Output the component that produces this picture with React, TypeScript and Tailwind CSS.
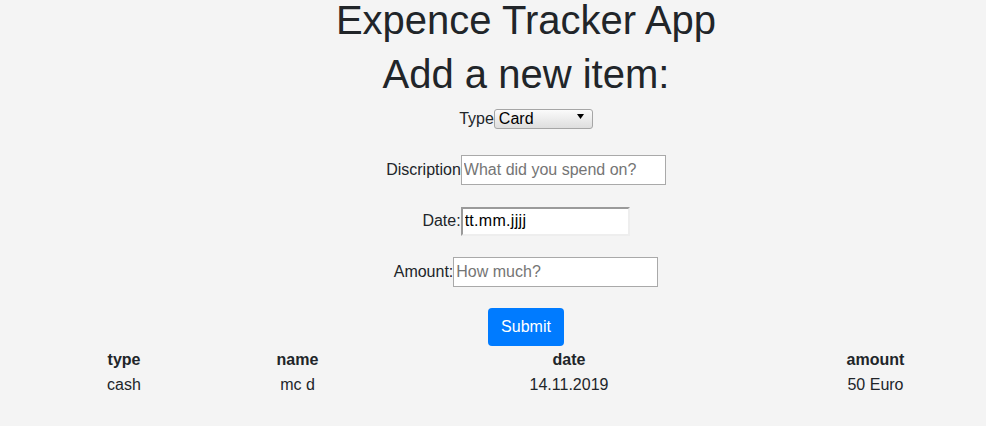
import { useState } from "react";

const rows = [{ type: "cash", name: "mc d", date: "14.11.2019", amount: "50 Euro" }];

export default function App() {
  const [type, setType] = useState("Card");

  return (
    <div className="min-h-[426px] bg-[#f4f4f4] text-[#212529] font-['Liberation_Sans',Arial,sans-serif] text-[16px]">
      <div className="flex flex-col items-center pl-[66px]">
        <h1 className="text-[40px] leading-[40px] font-normal">Expence Tracker App</h1>
        <h2 className="mt-[14px] text-[40px] leading-[40px] font-normal">Add a new item:</h2>

        <div className="mt-[8px] flex h-[30px] items-center">
          <label className="mt-[3px]">Type</label>
          <div className="relative h-[20px] w-[99px]">
            <select
              value={type}
              onChange={(e) => setType(e.target.value)}
              className="h-full w-full appearance-none rounded-[3px] border border-[#a6a6a6] bg-gradient-to-b from-[#fbfbfb] to-[#dedede] pl-[4px] text-[16px] leading-[17px] text-black outline-none"
            >
              <option>Card</option>
              <option>Cash</option>
            </select>
            <svg className="pointer-events-none absolute right-[9px] top-[7px]" width="7" height="5" viewBox="0 0 7 5">
              <polygon points="0,0 7,0 3.5,5" fill="#000" />
            </svg>
          </div>
        </div>

        <div className="mt-[23px] flex h-[30px] items-center">
          <label>Discription</label>
          <input
            placeholder="What did you spend on?"
            className="h-[30px] w-[205px] border border-[#a9a9a9] bg-white px-[2px] text-[16px] outline-none placeholder:text-[#757575]"
          />
        </div>

        <div className="mt-[21px] flex h-[30px] items-center">
          <label>Date:</label>
          <input
            value="tt.mm.jjjj"
            readOnly
            className="h-[29px] w-[169px] border-2 border-t-[#9a9a9a] border-l-[#9a9a9a] border-b-[#eeeeee] border-r-[#eeeeee] bg-white px-[2px] text-[16px] tracking-[0.3px] text-black outline-none"
          />
        </div>

        <div className="mt-[21px] flex h-[30px] items-center">
          <label>Amount:</label>
          <input
            placeholder="How much?"
            className="h-[30px] w-[205px] border border-[#a9a9a9] bg-white px-[2px] text-[16px] outline-none placeholder:text-[#757575]"
          />
        </div>

        <button className="mt-[21px] h-[38px] w-[76px] rounded-[4px] bg-[#007bff] text-[16px] text-white">
          Submit
        </button>
      </div>

      <div className="mt-px grid grid-cols-[248px_99px_444px_169px] text-center">
        <div className="font-bold leading-[25px]">type</div>
        <div className="font-bold leading-[25px]">name</div>
        <div className="font-bold leading-[25px]">date</div>
        <div className="font-bold leading-[25px]">amount</div>
        {rows.map((r) => (
          <>
            <div className="leading-[25px]">{r.type}</div>
            <div className="leading-[25px]">{r.name}</div>
            <div className="leading-[25px]">{r.date}</div>
            <div className="leading-[25px]">{r.amount}</div>
          </>
        ))}
      </div>
    </div>
  );
}
